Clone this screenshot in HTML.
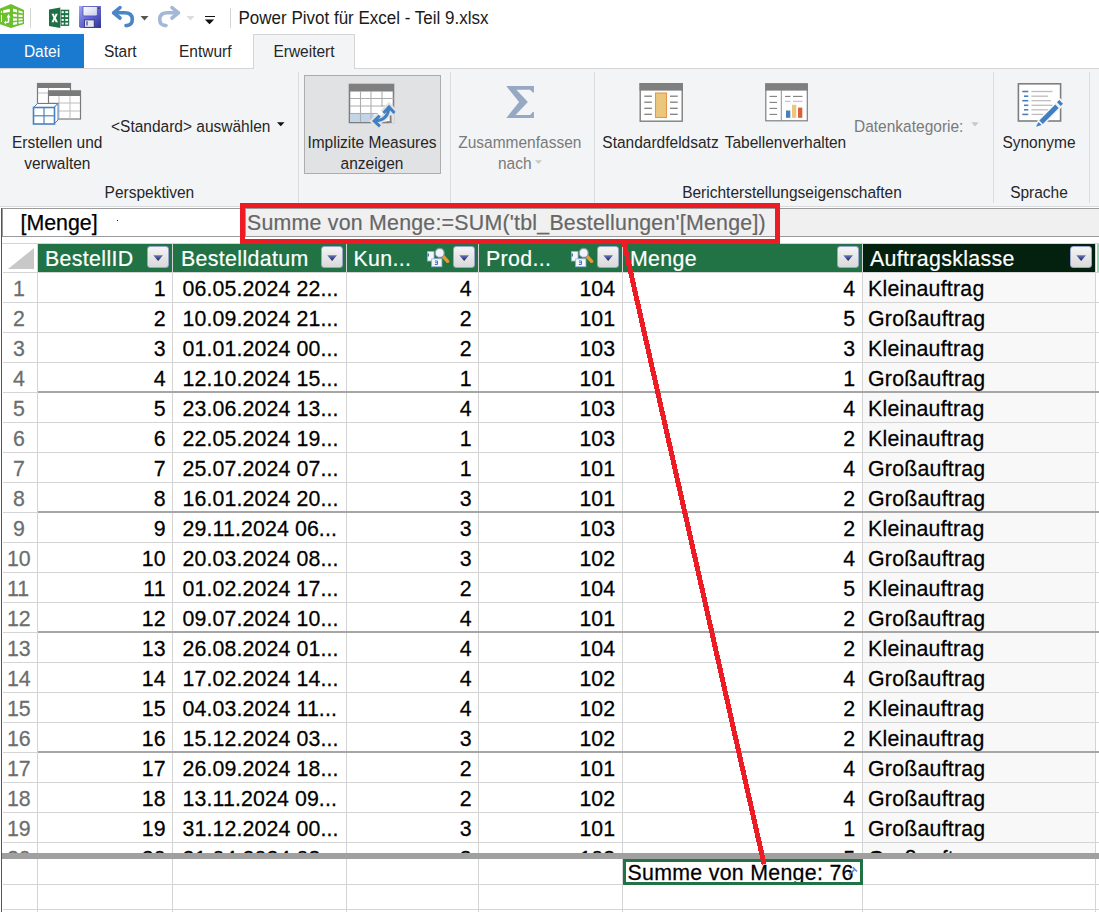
<!DOCTYPE html>
<html><head><meta charset="utf-8">
<style>
html,body{margin:0;padding:0;}
body{width:1099px;height:912px;overflow:hidden;position:relative;background:#fff;font-family:"Liberation Sans",sans-serif;}
.t{position:absolute;white-space:nowrap;line-height:1;}
.c{text-align:center;}
.sy{transform:scaleY(1.025);transform-origin:0 18px;-webkit-text-stroke:0.25px currentColor;}
.r{position:absolute;}
svg{position:absolute;overflow:visible;}
</style></head><body>
<svg style="left:0;top:0" width="36" height="32" viewBox="0 0 36 32">
<path d="M-1 9 L11 4 L24 10 L24 24 L11 28 L-1 24 Z" fill="#6cbf2e"/>
<g fill="#fff">
<path d="M13 8.5 L17 9.8 L17 12.5 L13 11.5Z"/><path d="M18.5 10.3 L22.6 11.8 L22.6 13.5 L18.5 12.6Z"/>
<path d="M13 13.8 L17 14.4 L17 16.8 L13 16.5Z"/><path d="M18.5 14.6 L22.6 15 L22.6 17 L18.5 16.9Z"/>
<path d="M13 18.3 L17 18.4 L17 20.5 L13 21Z"/><path d="M18.5 18.4 L22.6 18.4 L22.6 20 L18.5 20.6Z"/>
<path d="M13 22.5 L17 21.8 L17 24.2 L13 25Z"/><path d="M18.5 21.7 L22.6 21.3 L22.6 23 L18.5 23.8Z"/>
<path d="M3.2 10.3 L9.8 8.8 L9.8 12 L3.2 13Z"/>
<rect x="1" y="11" width="1" height="2"/><rect x="1" y="15" width="1" height="7"/>
<path d="M8.5 14 L10.5 17.5 L9.3 17.5 L9.3 21.5 Q9.3 23 7 23 L6 23 L6 24.5 L4 22.5 L6 20.5 L6 21.8 L7 21.8 Q7.8 21.8 7.8 21 L7.8 17.5 L6.5 17.5Z"/>
</g></svg>
<div class="r" style="left:30px;top:8px;width:1px;height:20px;background:#d4d4d4;"></div>
<svg style="left:0;top:0" width="1" height="1">
<rect x="60.6" y="9.7" width="8.6" height="16.2" fill="#1e7145"/>
<g fill="#fff"><rect x="61.6" y="11.2" width="2.2" height="1.9"/><rect x="65.3" y="11.2" width="2.8" height="1.9"/>
<rect x="61.6" y="15.2" width="2.2" height="1.9"/><rect x="65.3" y="15.2" width="2.8" height="1.9"/>
<rect x="61.6" y="19" width="2.2" height="1.9"/><rect x="65.3" y="19" width="2.8" height="1.9"/>
<rect x="61.6" y="22.6" width="2.2" height="1.9"/><rect x="65.3" y="22.6" width="2.8" height="1.9"/></g>
<path d="M49 9.4 L60.3 7.6 L60.3 28 L49 26Z" fill="#1e7145"/>
<path d="M51.6 13.8 H53.9 L54.7 16.3 L55.5 13.8 H57.8 L55.9 18 L57.9 22.3 H55.6 L54.7 19.7 L53.8 22.3 H51.5 L53.5 18Z" fill="#fff"/>
</svg>
<svg style="left:0;top:0" width="1" height="1">
<defs><linearGradient id="sv" x1="0" y1="0" x2="1" y2="1"><stop offset="0" stop-color="#a4a6f2"/><stop offset="0.5" stop-color="#6466d4"/><stop offset="1" stop-color="#2f3199"/></linearGradient>
<linearGradient id="sv2" x1="0" y1="0" x2="1" y2="1"><stop offset="0" stop-color="#ffffff"/><stop offset="1" stop-color="#c8cbe6"/></linearGradient></defs>
<path d="M79 6 H101 V28 H80.5 L79 26.5Z" fill="url(#sv)"/>
<path d="M83 6.5 H97.4 V14.6 Q97.4 15.9 96.1 15.9 H84.3 Q83 15.9 83 14.6Z" fill="url(#sv2)" stroke="#4245b8" stroke-width="0.7"/>
<rect x="84.6" y="19.9" width="9.6" height="7.4" fill="#e3e5f2" stroke="#2a2a66" stroke-width="0.8"/>
<rect x="86.3" y="21.2" width="1.4" height="4.3" fill="#4f52c0"/>
<rect x="98.2" y="7.6" width="1.2" height="1.2" fill="#222"/>
</svg>
<svg style="left:0;top:0" width="1" height="1">
<path d="M114 12.8 H124.5 Q132.3 12.8 132.3 19.3 Q132.3 25.6 126 25.6" fill="none" stroke="#4a86c5" stroke-width="3.6" stroke-linecap="round"/>
<path d="M120 7.6 L113.6 12.8 L120 18" fill="none" stroke="#4a86c5" stroke-width="3.6" stroke-linecap="round" stroke-linejoin="round"/>
</svg>
<svg style="left:140px;top:15px" width="9" height="6"><path d="M0.5 1 H8.5 L4.5 5.5Z" fill="#555"/></svg>
<svg style="left:0;top:0" width="1" height="1">
<path d="M178 12.8 H167.5 Q159.7 12.8 159.7 19.3 Q159.7 25.6 166 25.6" fill="none" stroke="#a3b8d6" stroke-width="3.6" stroke-linecap="round"/>
<path d="M172 7.6 L178.4 12.8 L172 18" fill="none" stroke="#a3b8d6" stroke-width="3.6" stroke-linecap="round" stroke-linejoin="round"/>
</svg>
<svg style="left:186px;top:15px" width="9" height="6"><path d="M0.5 1 H8.5 L4.5 5.5Z" fill="#dcdcdc"/></svg>
<div class="r" style="left:205px;top:15.6px;width:9.5px;height:1.4px;background:#111;"></div>
<svg style="left:204px;top:19px" width="12" height="8"><path d="M0.8 0.5 H10.2 L5.5 5.2Z" fill="#111"/></svg>
<div class="r" style="left:230px;top:8px;width:1px;height:20px;background:#d4d4d4;"></div>
<div class="t" style="left:238.5px;top:9.81px;font-size:17px;color:#1a1a1a;transform:scaleY(1.1);transform-origin:0 14.39px;">Power Pivot für Excel - Teil 9.xlsx</div>
<div class="r" style="left:0px;top:34px;width:84px;height:34px;background:#197acf;"></div>
<div class="t c" style="left:-158.0px;width:400px;top:44.48px;font-size:15.5px;color:#fff;transform:scaleY(1.1);transform-origin:0 13.12px;">Datei</div>
<div class="t c" style="left:-79.7px;width:400px;top:44.48px;font-size:15.5px;color:#262626;transform:scaleY(1.1);transform-origin:0 13.12px;">Start</div>
<div class="t c" style="left:5.3px;width:400px;top:44.48px;font-size:15.5px;color:#262626;transform:scaleY(1.1);transform-origin:0 13.12px;">Entwurf</div>
<div class="r" style="left:0px;top:68px;width:1099px;height:1px;background:#d5d5d5;"></div>
<div class="r" style="left:0px;top:69px;width:1099px;height:137px;background:#f3f4f6;"></div>
<div class="r" style="left:0px;top:206px;width:1099px;height:1px;background:#dadbdc;"></div>
<div class="r" style="left:253px;top:34px;width:102px;height:35px;background:#f3f4f6;box-sizing:border-box;border:1px solid #d5d5d5;border-bottom:none;"></div>
<div class="t c" style="left:104.0px;width:400px;top:44.48px;font-size:15.5px;color:#262626;transform:scaleY(1.1);transform-origin:0 13.12px;">Erweitert</div>
<div class="r" style="left:298px;top:72px;width:1px;height:131px;background:#dcdcdc;"></div>
<div class="r" style="left:450px;top:72px;width:1px;height:131px;background:#dcdcdc;"></div>
<div class="r" style="left:594px;top:72px;width:1px;height:131px;background:#dcdcdc;"></div>
<div class="r" style="left:993px;top:72px;width:1px;height:131px;background:#dcdcdc;"></div>
<div class="r" style="left:1089px;top:72px;width:1px;height:131px;background:#dcdcdc;"></div>
<svg style="left:32px;top:82px" width="50" height="44" viewBox="0 0 50 44">
<g>
<rect x="5.5" y="1.5" width="33" height="20" fill="#fff" stroke="#7a7a7a" stroke-width="1.2"/>
<rect x="5" y="1" width="34" height="5" fill="#7a7a7a"/>
<g stroke="#bdbdbd" stroke-width="1"><line x1="6" y1="11" x2="16" y2="11"/><line x1="16.5" y1="6" x2="16.5" y2="21"/></g>
<rect x="16.5" y="9" width="32" height="28" fill="#fff" stroke="#7a7a7a" stroke-width="1.2"/>
<rect x="16" y="8.5" width="33" height="5.5" fill="#7a7a7a"/>
<g stroke="#bdbdbd" stroke-width="1"><line x1="17" y1="21" x2="48" y2="21"/><line x1="17" y1="29" x2="48" y2="29"/><line x1="27" y1="14" x2="27" y2="37"/><line x1="38" y1="14" x2="38" y2="37"/></g>
</g>
<path d="M1.5 25.5 L5.5 21.5 L26 21.5 L22 25.5Z" fill="#fff" stroke="#4a80bf" stroke-width="1"/>
<path d="M22 25.5 L26 21.5 L26 38 L22 42Z" fill="#fff" stroke="#4a80bf" stroke-width="1"/>
<rect x="1.5" y="25.5" width="21" height="16.5" fill="#fff" stroke="#4a80bf" stroke-width="1.6"/>
<g stroke="#4a80bf" stroke-width="1.2"><line x1="1.5" y1="33.8" x2="22.5" y2="33.8"/><line x1="12" y1="25.5" x2="12" y2="42"/></g>
</svg>
<div class="t c" style="left:-142.8px;width:400px;top:135.28px;font-size:15.5px;color:#262626;transform:scaleY(1.1);transform-origin:0 13.12px;">Erstellen und</div>
<div class="t c" style="left:-142.7px;width:400px;top:156.28px;font-size:15.5px;color:#262626;transform:scaleY(1.1);transform-origin:0 13.12px;">verwalten</div>
<div class="t" style="left:111.0px;top:118.68px;font-size:15.5px;color:#262626;transform:scaleY(1.1);transform-origin:0 13.12px;">&lt;Standard&gt; auswählen</div>
<svg style="left:277px;top:122px" width="8" height="5"><path d="M0 0.3 H7.5 L3.75 4.3Z" fill="#111"/></svg>
<div class="t c" style="left:-50.6px;width:400px;top:185.18px;font-size:15.5px;color:#262626;transform:scaleY(1.1);transform-origin:0 13.12px;">Perspektiven</div>
<div class="r" style="left:304px;top:75px;width:137px;height:99px;background:#e1e2e3;box-sizing:border-box;border:1px solid #adadad;"></div>
<svg style="left:348px;top:83px" width="50" height="44" viewBox="0 0 50 44">
<rect x="1.5" y="1.5" width="44" height="38" fill="#fff" stroke="#7f7f7f" stroke-width="1.6"/>
<rect x="1" y="1" width="45" height="7.5" fill="#7f7f7f"/>
<rect x="2.3" y="31" width="24" height="8" fill="#c3d5ea"/>
<g stroke="#adadad" stroke-width="1.1"><line x1="2" y1="15.5" x2="46" y2="15.5"/><line x1="2" y1="23" x2="46" y2="23"/><line x1="2" y1="30.5" x2="30" y2="30.5"/>
<line x1="12.5" y1="8" x2="12.5" y2="39"/><line x1="23" y1="8" x2="23" y2="39"/><line x1="34" y1="8" x2="34" y2="24"/></g>
<path d="M41 22 Q40.5 37.5 25.5 38" fill="none" stroke="#e1e2e3" stroke-width="7"/>
<path d="M35 30 L41 23.5 L47 30" fill="none" stroke="#e1e2e3" stroke-width="6.5"/>
<path d="M31.5 32.5 L25.8 38 L31.7 43.5" fill="none" stroke="#e1e2e3" stroke-width="6.5"/>
<rect x="41.5" y="31" width="5" height="9.5" fill="#e1e2e3"/>
<rect x="41.8" y="32.5" width="1.7" height="7.3" fill="#7f7f7f"/>
<rect x="38.5" y="38.2" width="5" height="1.6" fill="#7f7f7f"/>
<path d="M41 23.5 Q40.5 37.5 26.5 38" fill="none" stroke="#3f7fc3" stroke-width="3"/>
<path d="M35.5 29.9 L41 24 L46.5 29.9" fill="none" stroke="#3f7fc3" stroke-width="3" stroke-linejoin="miter"/>
<path d="M31.7 32.7 L26.2 38 L31.9 43.4" fill="none" stroke="#3f7fc3" stroke-width="3" stroke-linejoin="miter"/>
</svg>
<div class="t c" style="left:172.0px;width:400px;top:135.28px;font-size:15.5px;color:#262626;transform:scaleY(1.1);transform-origin:0 13.12px;">Implizite Measures</div>
<div class="t c" style="left:172.0px;width:400px;top:156.28px;font-size:15.5px;color:#262626;transform:scaleY(1.1);transform-origin:0 13.12px;">anzeigen</div>
<svg style="left:0;top:0" width="1" height="1"><path transform="translate(0,0)" d="M506.24 85.95 L533.93 85.95 L533.93 92.53 L532.83 92.53 L530.09 89.79 L516.38 89.79 L527.89 102.12 L515.56 115 L530.09 115 L532.83 111.99 L533.93 111.99 L533.93 118.02 L506.24 118.02 L519.12 102.12Z" fill="#97a8c4"/></svg>
<div class="t c" style="left:319.8px;width:400px;top:135.28px;font-size:15.5px;color:#7a7a7a;transform:scaleY(1.1);transform-origin:0 13.12px;">Zusammenfassen</div>
<div class="t c" style="left:314.8px;width:400px;top:156.48px;font-size:15.5px;color:#7a7a7a;transform:scaleY(1.1);transform-origin:0 13.12px;">nach</div>
<svg style="left:535px;top:160px" width="8" height="5"><path d="M0 0.2 H7 L3.5 4Z" fill="#c8c8c8"/></svg>
<svg style="left:638px;top:82px" width="46" height="41" viewBox="0 0 46 41">
<rect x="2.2" y="1.7" width="42" height="37.5" fill="#fff" stroke="#7f7f7f" stroke-width="1.4"/>
<rect x="1.5" y="1" width="43.4" height="7.6" fill="#7f7f7f"/>
<rect x="17.5" y="11" width="11" height="24.5" fill="#ebc77e" stroke="#e8954a" stroke-width="1.1"/>
<g stroke="#7f7f7f" stroke-width="1.3"><line x1="6.3" y1="14.2" x2="13.9" y2="14.2"/><line x1="6.3" y1="20.2" x2="13.9" y2="20.2"/><line x1="6.3" y1="26.3" x2="13.9" y2="26.3"/><line x1="6.3" y1="32.3" x2="13.9" y2="32.3"/>
<line x1="32" y1="14.2" x2="39.7" y2="14.2"/><line x1="32" y1="20.2" x2="39.7" y2="20.2"/><line x1="32" y1="26.3" x2="39.7" y2="26.3"/><line x1="32" y1="32.3" x2="39.7" y2="32.3"/></g>
</svg>
<svg style="left:764px;top:82px" width="46" height="41" viewBox="0 0 46 41">
<rect x="1.8" y="2" width="41.5" height="36.8" fill="#fff" stroke="#7f7f7f" stroke-width="1.2"/>
<rect x="1.3" y="1.3" width="42.4" height="7.3" fill="#7f7f7f"/>
<line x1="17.3" y1="8" x2="17.3" y2="38.8" stroke="#8f8f8f" stroke-width="1"/>
<g stroke="#7f7f7f" stroke-width="1.1"><line x1="5.5" y1="14.4" x2="13" y2="14.4"/><line x1="5.5" y1="20.4" x2="13" y2="20.4"/><line x1="5.5" y1="26.4" x2="13" y2="26.4"/><line x1="5.5" y1="32.4" x2="13" y2="32.4"/>
<line x1="21" y1="14.4" x2="26.5" y2="14.4"/><line x1="29" y1="14.4" x2="38.5" y2="14.4"/></g>
<g stroke="#bdbdbd" stroke-width="1.1"><line x1="21" y1="19.3" x2="26.5" y2="19.3"/><line x1="29" y1="19.3" x2="38.5" y2="19.3"/></g>
<rect x="22" y="28.5" width="4.3" height="7.3" fill="#4a7fbd"/>
<rect x="28" y="22.8" width="4.3" height="13" fill="#ebc77e"/>
<rect x="34" y="25.6" width="4.3" height="10.2" fill="#d8603d"/>
</svg>
<div class="t c" style="left:460.5px;width:400px;top:135.28px;font-size:15.5px;color:#262626;transform:scaleY(1.1);transform-origin:0 13.12px;">Standardfeldsatz</div>
<div class="t c" style="left:585.5px;width:400px;top:135.28px;font-size:15.5px;color:#262626;transform:scaleY(1.1);transform-origin:0 13.12px;">Tabellenverhalten</div>
<div class="t" style="left:854.0px;top:118.68px;font-size:15.5px;color:#7a7a7a;transform:scaleY(1.1);transform-origin:0 13.12px;">Datenkategorie:</div>
<svg style="left:971px;top:121.5px" width="9" height="5"><path d="M0.3 0.2 H7.7 L4 4.4Z" fill="#c8c8c8"/></svg>
<div class="t c" style="left:592.0px;width:400px;top:185.18px;font-size:15.5px;color:#262626;transform:scaleY(1.1);transform-origin:0 13.12px;">Berichterstellungseigenschaften</div>
<svg style="left:1016px;top:82px" width="50" height="46" viewBox="0 0 50 46">
<rect x="2.4" y="1.8" width="42.2" height="37.2" fill="#fff" stroke="#7f7f7f" stroke-width="1.6"/>
<g stroke="#4a80bf" stroke-width="1.6"><line x1="6.3" y1="9.5" x2="12.3" y2="9.5"/><line x1="8" y1="14.2" x2="12.3" y2="14.2"/><line x1="6.3" y1="18.7" x2="12.3" y2="18.7"/><line x1="8" y1="23.3" x2="12.3" y2="23.3"/><line x1="8" y1="27.8" x2="12.3" y2="27.8"/><line x1="6.3" y1="32.4" x2="12.3" y2="32.4"/></g>
<g stroke="#bdbdbd" stroke-width="1.3"><line x1="15.5" y1="9.5" x2="36.5" y2="9.5"/><line x1="15.5" y1="14.2" x2="32" y2="14.2"/><line x1="15.5" y1="18.7" x2="35" y2="18.7"/><line x1="15.5" y1="23.3" x2="36.5" y2="23.3"/><line x1="15.5" y1="27.8" x2="32" y2="27.8"/><line x1="15.5" y1="32.4" x2="27" y2="32.4"/></g>
<path d="M44 16 L49.5 21.5 L27 44 L19 46.5 L21.5 38.5Z" fill="#f3f4f6"/>
<path d="M43.3 18 L47 21.7 L44.7 23.9 L41 20.2Z" fill="#3f7fc3"/>
<path d="M39.3 22.5 L42.7 25.9 L26.8 41.9 L23.4 38.5Z" fill="#3f7fc3"/>
<path d="M22.5 39.9 L25.6 43 L20 44.7Z" fill="#3f7fc3"/>
</svg>
<div class="t c" style="left:839.0px;width:400px;top:135.28px;font-size:15.5px;color:#262626;transform:scaleY(1.1);transform-origin:0 13.12px;">Synonyme</div>
<div class="t c" style="left:839.0px;width:400px;top:185.18px;font-size:15.5px;color:#262626;transform:scaleY(1.1);transform-origin:0 13.12px;">Sprache</div>
<div class="r" style="left:0px;top:207px;width:1099px;height:1px;background:#ffffff;"></div>
<div class="r" style="left:2px;top:208px;width:1097px;height:1px;background:#9a9a9a;"></div>
<div class="r" style="left:2px;top:209px;width:1097px;height:27px;background:#ffffff;"></div>
<div class="r" style="left:245px;top:209px;width:854px;height:27px;background:#f0f0f0;"></div>
<div class="r" style="left:245px;top:208px;width:1px;height:29px;background:#9a9a9a;"></div>
<div class="r" style="left:2px;top:236px;width:1097px;height:1px;background:#9a9a9a;"></div>
<div class="r" style="left:2px;top:208px;width:1px;height:29px;background:#9a9a9a;"></div>
<div class="t" style="left:20.5px;top:212.84px;font-size:21.33px;color:#000;-webkit-text-stroke:0.25px #000;">[Menge]</div>
<div class="r" style="left:117px;top:220px;width:1px;height:1px;background:#000;"></div>
<div class="t" style="left:247.0px;top:212.94px;font-size:21.33px;color:#666;letter-spacing:0.235px;-webkit-text-stroke:0.2px #666;">Summe von Menge:=SUM('tbl_Bestellungen'[Menge])</div>
<div class="r" style="left:2px;top:243px;width:1097px;height:1px;background:#d4d4d4;"></div>
<div class="r" style="left:2px;top:244px;width:35px;height:28px;background:#ffffff;"></div>
<svg style="left:8px;top:248px" width="27" height="22"><path d="M0 21 L26 0 L26 21Z" fill="#c8c8c8"/></svg>
<div class="r" style="left:38px;top:244px;width:824px;height:28px;background:#217346;"></div>
<div class="r" style="left:863px;top:244px;width:232px;height:28px;background:#04200f;"></div>
<div class="r" style="left:1097px;top:244px;width:2px;height:28px;background:#9fd8b5;"></div>
<div class="r" style="left:863px;top:273px;width:232px;height:580px;background:#f8f8f8;"></div>
<div class="r" style="left:37px;top:244px;width:1px;height:668px;background:#d4d4d4;"></div>
<div class="r" style="left:172px;top:244px;width:1px;height:668px;background:#d4d4d4;"></div>
<div class="r" style="left:346px;top:244px;width:1px;height:668px;background:#d4d4d4;"></div>
<div class="r" style="left:478px;top:244px;width:1px;height:668px;background:#d4d4d4;"></div>
<div class="r" style="left:622px;top:244px;width:1px;height:668px;background:#d4d4d4;"></div>
<div class="r" style="left:862px;top:244px;width:1px;height:668px;background:#d4d4d4;"></div>
<div class="r" style="left:1095px;top:244px;width:1px;height:668px;background:#d4d4d4;"></div>
<div class="r" style="left:3px;top:272px;width:1096px;height:1px;background:#d4d4d4;"></div>
<div class="r" style="left:3px;top:302px;width:1096px;height:1px;background:#d4d4d4;"></div>
<div class="r" style="left:3px;top:332px;width:1096px;height:1px;background:#d4d4d4;"></div>
<div class="r" style="left:3px;top:362px;width:1096px;height:1px;background:#d4d4d4;"></div>
<div class="r" style="left:3px;top:392px;width:34px;height:1px;background:#d4d4d4;"></div>
<div class="r" style="left:38px;top:391px;width:1061px;height:2px;background:#a6a6a6;"></div>
<div class="r" style="left:3px;top:422px;width:1096px;height:1px;background:#d4d4d4;"></div>
<div class="r" style="left:3px;top:452px;width:1096px;height:1px;background:#d4d4d4;"></div>
<div class="r" style="left:3px;top:482px;width:1096px;height:1px;background:#d4d4d4;"></div>
<div class="r" style="left:3px;top:512px;width:34px;height:1px;background:#d4d4d4;"></div>
<div class="r" style="left:38px;top:511px;width:1061px;height:2px;background:#a6a6a6;"></div>
<div class="r" style="left:3px;top:542px;width:1096px;height:1px;background:#d4d4d4;"></div>
<div class="r" style="left:3px;top:572px;width:1096px;height:1px;background:#d4d4d4;"></div>
<div class="r" style="left:3px;top:602px;width:1096px;height:1px;background:#d4d4d4;"></div>
<div class="r" style="left:3px;top:632px;width:34px;height:1px;background:#d4d4d4;"></div>
<div class="r" style="left:38px;top:631px;width:1061px;height:2px;background:#a6a6a6;"></div>
<div class="r" style="left:3px;top:662px;width:1096px;height:1px;background:#d4d4d4;"></div>
<div class="r" style="left:3px;top:692px;width:1096px;height:1px;background:#d4d4d4;"></div>
<div class="r" style="left:3px;top:722px;width:1096px;height:1px;background:#d4d4d4;"></div>
<div class="r" style="left:3px;top:752px;width:34px;height:1px;background:#d4d4d4;"></div>
<div class="r" style="left:38px;top:751px;width:1061px;height:2px;background:#a6a6a6;"></div>
<div class="r" style="left:3px;top:782px;width:1096px;height:1px;background:#d4d4d4;"></div>
<div class="r" style="left:3px;top:812px;width:1096px;height:1px;background:#d4d4d4;"></div>
<div class="r" style="left:3px;top:842px;width:1096px;height:1px;background:#d4d4d4;"></div>
<div class="r" style="left:3px;top:884px;width:1096px;height:1px;background:#d4d4d4;"></div>
<div class="r" style="left:3px;top:909px;width:1096px;height:1px;background:#d4d4d4;"></div>
<div class="t" style="left:45.0px;top:248.94px;font-size:21.33px;color:#fff;letter-spacing:0.35px;-webkit-text-stroke:0.2px #fff;">BestellID</div>
<div class="t" style="left:181.0px;top:248.94px;font-size:21.33px;color:#fff;letter-spacing:0.35px;-webkit-text-stroke:0.2px #fff;">Bestelldatum</div>
<div class="t" style="left:353.5px;top:248.94px;font-size:21.33px;color:#fff;letter-spacing:0.35px;-webkit-text-stroke:0.2px #fff;">Kun...</div>
<div class="t" style="left:486.0px;top:248.94px;font-size:21.33px;color:#fff;letter-spacing:0.35px;-webkit-text-stroke:0.2px #fff;">Prod...</div>
<div class="t" style="left:630.0px;top:248.94px;font-size:21.33px;color:#fff;letter-spacing:0.35px;-webkit-text-stroke:0.2px #fff;">Menge</div>
<div class="t" style="left:870.0px;top:248.94px;font-size:21.33px;color:#fff;letter-spacing:0.35px;-webkit-text-stroke:0.2px #fff;">Auftragsklasse</div>
<div class="r" style="left:147px;top:246px;width:22px;height:22px;box-sizing:border-box;border:1px solid #9aa3c9;border-radius:3px;background:linear-gradient(#f4f4f4,#d9d9dc);"></div><svg style="left:153px;top:255px" width="11" height="7"><defs><linearGradient id="g147" x1="0" y1="0" x2="0" y2="1"><stop offset="0" stop-color="#6675c4"/><stop offset="1" stop-color="#1c1d4a"/></linearGradient></defs><path d="M0.3 0.3 H10 L5.15 6Z" fill="url(#g147)"/></svg>
<div class="r" style="left:321px;top:246px;width:22px;height:22px;box-sizing:border-box;border:1px solid #9aa3c9;border-radius:3px;background:linear-gradient(#f4f4f4,#d9d9dc);"></div><svg style="left:327px;top:255px" width="11" height="7"><defs><linearGradient id="g321" x1="0" y1="0" x2="0" y2="1"><stop offset="0" stop-color="#6675c4"/><stop offset="1" stop-color="#1c1d4a"/></linearGradient></defs><path d="M0.3 0.3 H10 L5.15 6Z" fill="url(#g321)"/></svg>
<div class="r" style="left:453px;top:246px;width:22px;height:22px;box-sizing:border-box;border:1px solid #9aa3c9;border-radius:3px;background:linear-gradient(#f4f4f4,#d9d9dc);"></div><svg style="left:459px;top:255px" width="11" height="7"><defs><linearGradient id="g453" x1="0" y1="0" x2="0" y2="1"><stop offset="0" stop-color="#6675c4"/><stop offset="1" stop-color="#1c1d4a"/></linearGradient></defs><path d="M0.3 0.3 H10 L5.15 6Z" fill="url(#g453)"/></svg>
<div class="r" style="left:597px;top:246px;width:22px;height:22px;box-sizing:border-box;border:1px solid #9aa3c9;border-radius:3px;background:linear-gradient(#f4f4f4,#d9d9dc);"></div><svg style="left:603px;top:255px" width="11" height="7"><defs><linearGradient id="g597" x1="0" y1="0" x2="0" y2="1"><stop offset="0" stop-color="#6675c4"/><stop offset="1" stop-color="#1c1d4a"/></linearGradient></defs><path d="M0.3 0.3 H10 L5.15 6Z" fill="url(#g597)"/></svg>
<div class="r" style="left:837px;top:246px;width:22px;height:22px;box-sizing:border-box;border:1px solid #9aa3c9;border-radius:3px;background:linear-gradient(#f4f4f4,#d9d9dc);"></div><svg style="left:843px;top:255px" width="11" height="7"><defs><linearGradient id="g837" x1="0" y1="0" x2="0" y2="1"><stop offset="0" stop-color="#6675c4"/><stop offset="1" stop-color="#1c1d4a"/></linearGradient></defs><path d="M0.3 0.3 H10 L5.15 6Z" fill="url(#g837)"/></svg>
<div class="r" style="left:1070px;top:246px;width:22px;height:22px;box-sizing:border-box;border:1px solid #9aa3c9;border-radius:3px;background:linear-gradient(#f4f4f4,#d9d9dc);"></div><svg style="left:1076px;top:255px" width="11" height="7"><defs><linearGradient id="g1070" x1="0" y1="0" x2="0" y2="1"><stop offset="0" stop-color="#6675c4"/><stop offset="1" stop-color="#1c1d4a"/></linearGradient></defs><path d="M0.3 0.3 H10 L5.15 6Z" fill="url(#g1070)"/></svg>
<svg style="left:426px;top:247px" width="24" height="21" viewBox="0 0 24 21"><rect x="1.4" y="4.6" width="6.6" height="9.4" fill="#f4f7fc" stroke="#9db2dc" stroke-width="0.8"/><rect x="1.6" y="6.5" width="1.4" height="3" fill="#4f72bd"/><rect x="5.7" y="11.8" width="10.2" height="7.9" fill="#f4f7fc" stroke="#9db2dc" stroke-width="0.8"/><path d="M8.8 14 H11.5 V17.5 H8.8 M9 15.7 H11.5" fill="none" stroke="#4f72bd" stroke-width="1"/><line x1="16.8" y1="9" x2="21.6" y2="14.3" stroke="#e39a32" stroke-width="3.4" stroke-linecap="round"/><circle cx="13.7" cy="5.9" r="4.5" fill="#eef3fc" stroke="#8d939c" stroke-width="1.1"/></svg>
<svg style="left:570px;top:247px" width="24" height="21" viewBox="0 0 24 21"><rect x="1.4" y="4.6" width="6.6" height="9.4" fill="#f4f7fc" stroke="#9db2dc" stroke-width="0.8"/><rect x="1.6" y="6.5" width="1.4" height="3" fill="#4f72bd"/><rect x="5.7" y="11.8" width="10.2" height="7.9" fill="#f4f7fc" stroke="#9db2dc" stroke-width="0.8"/><path d="M8.8 14 H11.5 V17.5 H8.8 M9 15.7 H11.5" fill="none" stroke="#4f72bd" stroke-width="1"/><line x1="16.8" y1="9" x2="21.6" y2="14.3" stroke="#e39a32" stroke-width="3.4" stroke-linecap="round"/><circle cx="13.7" cy="5.9" r="4.5" fill="#eef3fc" stroke="#8d939c" stroke-width="1.1"/></svg>
<div class="r" style="left:0;top:273px;width:1099px;height:580px;overflow:hidden;">
<div class="t sy" style="left:13px;top:5.74px;font-size:21.33px;color:#6d6d6d;">1</div><div class="t sy" style="right:933.5px;top:5.74px;font-size:21.33px;color:#000;">1</div><div class="t sy" style="left:182.5px;top:5.74px;font-size:21.33px;color:#000;letter-spacing:0.12px;">06.05.2024 22...</div><div class="t sy" style="right:627.5px;top:5.74px;font-size:21.33px;color:#000;">4</div><div class="t sy" style="right:484px;top:5.74px;font-size:21.33px;color:#000;">104</div><div class="t sy" style="right:244px;top:5.74px;font-size:21.33px;color:#000;">4</div><div class="t sy" style="left:868px;top:5.74px;font-size:21.33px;color:#000;letter-spacing:0.22px;">Kleinauftrag</div>
<div class="t sy" style="left:13px;top:35.74px;font-size:21.33px;color:#6d6d6d;">2</div><div class="t sy" style="right:933.5px;top:35.74px;font-size:21.33px;color:#000;">2</div><div class="t sy" style="left:182.5px;top:35.74px;font-size:21.33px;color:#000;letter-spacing:0.12px;">10.09.2024 21...</div><div class="t sy" style="right:627.5px;top:35.74px;font-size:21.33px;color:#000;">2</div><div class="t sy" style="right:484px;top:35.74px;font-size:21.33px;color:#000;">101</div><div class="t sy" style="right:244px;top:35.74px;font-size:21.33px;color:#000;">5</div><div class="t sy" style="left:868px;top:35.74px;font-size:21.33px;color:#000;letter-spacing:0.22px;">Großauftrag</div>
<div class="t sy" style="left:13px;top:65.74px;font-size:21.33px;color:#6d6d6d;">3</div><div class="t sy" style="right:933.5px;top:65.74px;font-size:21.33px;color:#000;">3</div><div class="t sy" style="left:182.5px;top:65.74px;font-size:21.33px;color:#000;letter-spacing:0.12px;">01.01.2024 00...</div><div class="t sy" style="right:627.5px;top:65.74px;font-size:21.33px;color:#000;">2</div><div class="t sy" style="right:484px;top:65.74px;font-size:21.33px;color:#000;">103</div><div class="t sy" style="right:244px;top:65.74px;font-size:21.33px;color:#000;">3</div><div class="t sy" style="left:868px;top:65.74px;font-size:21.33px;color:#000;letter-spacing:0.22px;">Kleinauftrag</div>
<div class="t sy" style="left:13px;top:95.74px;font-size:21.33px;color:#6d6d6d;">4</div><div class="t sy" style="right:933.5px;top:95.74px;font-size:21.33px;color:#000;">4</div><div class="t sy" style="left:182.5px;top:95.74px;font-size:21.33px;color:#000;letter-spacing:0.12px;">12.10.2024 15...</div><div class="t sy" style="right:627.5px;top:95.74px;font-size:21.33px;color:#000;">1</div><div class="t sy" style="right:484px;top:95.74px;font-size:21.33px;color:#000;">101</div><div class="t sy" style="right:244px;top:95.74px;font-size:21.33px;color:#000;">1</div><div class="t sy" style="left:868px;top:95.74px;font-size:21.33px;color:#000;letter-spacing:0.22px;">Großauftrag</div>
<div class="t sy" style="left:13px;top:125.74px;font-size:21.33px;color:#6d6d6d;">5</div><div class="t sy" style="right:933.5px;top:125.74px;font-size:21.33px;color:#000;">5</div><div class="t sy" style="left:182.5px;top:125.74px;font-size:21.33px;color:#000;letter-spacing:0.12px;">23.06.2024 13...</div><div class="t sy" style="right:627.5px;top:125.74px;font-size:21.33px;color:#000;">4</div><div class="t sy" style="right:484px;top:125.74px;font-size:21.33px;color:#000;">103</div><div class="t sy" style="right:244px;top:125.74px;font-size:21.33px;color:#000;">4</div><div class="t sy" style="left:868px;top:125.74px;font-size:21.33px;color:#000;letter-spacing:0.22px;">Kleinauftrag</div>
<div class="t sy" style="left:13px;top:155.74px;font-size:21.33px;color:#6d6d6d;">6</div><div class="t sy" style="right:933.5px;top:155.74px;font-size:21.33px;color:#000;">6</div><div class="t sy" style="left:182.5px;top:155.74px;font-size:21.33px;color:#000;letter-spacing:0.12px;">22.05.2024 19...</div><div class="t sy" style="right:627.5px;top:155.74px;font-size:21.33px;color:#000;">1</div><div class="t sy" style="right:484px;top:155.74px;font-size:21.33px;color:#000;">103</div><div class="t sy" style="right:244px;top:155.74px;font-size:21.33px;color:#000;">2</div><div class="t sy" style="left:868px;top:155.74px;font-size:21.33px;color:#000;letter-spacing:0.22px;">Kleinauftrag</div>
<div class="t sy" style="left:13px;top:185.74px;font-size:21.33px;color:#6d6d6d;">7</div><div class="t sy" style="right:933.5px;top:185.74px;font-size:21.33px;color:#000;">7</div><div class="t sy" style="left:182.5px;top:185.74px;font-size:21.33px;color:#000;letter-spacing:0.12px;">25.07.2024 07...</div><div class="t sy" style="right:627.5px;top:185.74px;font-size:21.33px;color:#000;">1</div><div class="t sy" style="right:484px;top:185.74px;font-size:21.33px;color:#000;">101</div><div class="t sy" style="right:244px;top:185.74px;font-size:21.33px;color:#000;">4</div><div class="t sy" style="left:868px;top:185.74px;font-size:21.33px;color:#000;letter-spacing:0.22px;">Großauftrag</div>
<div class="t sy" style="left:13px;top:215.74px;font-size:21.33px;color:#6d6d6d;">8</div><div class="t sy" style="right:933.5px;top:215.74px;font-size:21.33px;color:#000;">8</div><div class="t sy" style="left:182.5px;top:215.74px;font-size:21.33px;color:#000;letter-spacing:0.12px;">16.01.2024 20...</div><div class="t sy" style="right:627.5px;top:215.74px;font-size:21.33px;color:#000;">3</div><div class="t sy" style="right:484px;top:215.74px;font-size:21.33px;color:#000;">101</div><div class="t sy" style="right:244px;top:215.74px;font-size:21.33px;color:#000;">2</div><div class="t sy" style="left:868px;top:215.74px;font-size:21.33px;color:#000;letter-spacing:0.22px;">Großauftrag</div>
<div class="t sy" style="left:13px;top:245.74px;font-size:21.33px;color:#6d6d6d;">9</div><div class="t sy" style="right:933.5px;top:245.74px;font-size:21.33px;color:#000;">9</div><div class="t sy" style="left:182.5px;top:245.74px;font-size:21.33px;color:#000;letter-spacing:0.12px;">29.11.2024 06...</div><div class="t sy" style="right:627.5px;top:245.74px;font-size:21.33px;color:#000;">3</div><div class="t sy" style="right:484px;top:245.74px;font-size:21.33px;color:#000;">103</div><div class="t sy" style="right:244px;top:245.74px;font-size:21.33px;color:#000;">2</div><div class="t sy" style="left:868px;top:245.74px;font-size:21.33px;color:#000;letter-spacing:0.22px;">Kleinauftrag</div>
<div class="t sy" style="left:7px;top:275.74px;font-size:21.33px;color:#6d6d6d;">10</div><div class="t sy" style="right:933.5px;top:275.74px;font-size:21.33px;color:#000;">10</div><div class="t sy" style="left:182.5px;top:275.74px;font-size:21.33px;color:#000;letter-spacing:0.12px;">20.03.2024 08...</div><div class="t sy" style="right:627.5px;top:275.74px;font-size:21.33px;color:#000;">3</div><div class="t sy" style="right:484px;top:275.74px;font-size:21.33px;color:#000;">102</div><div class="t sy" style="right:244px;top:275.74px;font-size:21.33px;color:#000;">4</div><div class="t sy" style="left:868px;top:275.74px;font-size:21.33px;color:#000;letter-spacing:0.22px;">Großauftrag</div>
<div class="t sy" style="left:7px;top:305.74px;font-size:21.33px;color:#6d6d6d;">11</div><div class="t sy" style="right:933.5px;top:305.74px;font-size:21.33px;color:#000;">11</div><div class="t sy" style="left:182.5px;top:305.74px;font-size:21.33px;color:#000;letter-spacing:0.12px;">01.02.2024 17...</div><div class="t sy" style="right:627.5px;top:305.74px;font-size:21.33px;color:#000;">2</div><div class="t sy" style="right:484px;top:305.74px;font-size:21.33px;color:#000;">104</div><div class="t sy" style="right:244px;top:305.74px;font-size:21.33px;color:#000;">5</div><div class="t sy" style="left:868px;top:305.74px;font-size:21.33px;color:#000;letter-spacing:0.22px;">Kleinauftrag</div>
<div class="t sy" style="left:7px;top:335.74px;font-size:21.33px;color:#6d6d6d;">12</div><div class="t sy" style="right:933.5px;top:335.74px;font-size:21.33px;color:#000;">12</div><div class="t sy" style="left:182.5px;top:335.74px;font-size:21.33px;color:#000;letter-spacing:0.12px;">09.07.2024 10...</div><div class="t sy" style="right:627.5px;top:335.74px;font-size:21.33px;color:#000;">4</div><div class="t sy" style="right:484px;top:335.74px;font-size:21.33px;color:#000;">101</div><div class="t sy" style="right:244px;top:335.74px;font-size:21.33px;color:#000;">2</div><div class="t sy" style="left:868px;top:335.74px;font-size:21.33px;color:#000;letter-spacing:0.22px;">Großauftrag</div>
<div class="t sy" style="left:7px;top:365.74px;font-size:21.33px;color:#6d6d6d;">13</div><div class="t sy" style="right:933.5px;top:365.74px;font-size:21.33px;color:#000;">13</div><div class="t sy" style="left:182.5px;top:365.74px;font-size:21.33px;color:#000;letter-spacing:0.12px;">26.08.2024 01...</div><div class="t sy" style="right:627.5px;top:365.74px;font-size:21.33px;color:#000;">4</div><div class="t sy" style="right:484px;top:365.74px;font-size:21.33px;color:#000;">104</div><div class="t sy" style="right:244px;top:365.74px;font-size:21.33px;color:#000;">2</div><div class="t sy" style="left:868px;top:365.74px;font-size:21.33px;color:#000;letter-spacing:0.22px;">Kleinauftrag</div>
<div class="t sy" style="left:7px;top:395.74px;font-size:21.33px;color:#6d6d6d;">14</div><div class="t sy" style="right:933.5px;top:395.74px;font-size:21.33px;color:#000;">14</div><div class="t sy" style="left:182.5px;top:395.74px;font-size:21.33px;color:#000;letter-spacing:0.12px;">17.02.2024 14...</div><div class="t sy" style="right:627.5px;top:395.74px;font-size:21.33px;color:#000;">4</div><div class="t sy" style="right:484px;top:395.74px;font-size:21.33px;color:#000;">102</div><div class="t sy" style="right:244px;top:395.74px;font-size:21.33px;color:#000;">4</div><div class="t sy" style="left:868px;top:395.74px;font-size:21.33px;color:#000;letter-spacing:0.22px;">Großauftrag</div>
<div class="t sy" style="left:7px;top:425.74px;font-size:21.33px;color:#6d6d6d;">15</div><div class="t sy" style="right:933.5px;top:425.74px;font-size:21.33px;color:#000;">15</div><div class="t sy" style="left:182.5px;top:425.74px;font-size:21.33px;color:#000;letter-spacing:0.12px;">04.03.2024 11...</div><div class="t sy" style="right:627.5px;top:425.74px;font-size:21.33px;color:#000;">4</div><div class="t sy" style="right:484px;top:425.74px;font-size:21.33px;color:#000;">102</div><div class="t sy" style="right:244px;top:425.74px;font-size:21.33px;color:#000;">2</div><div class="t sy" style="left:868px;top:425.74px;font-size:21.33px;color:#000;letter-spacing:0.22px;">Kleinauftrag</div>
<div class="t sy" style="left:7px;top:455.74px;font-size:21.33px;color:#6d6d6d;">16</div><div class="t sy" style="right:933.5px;top:455.74px;font-size:21.33px;color:#000;">16</div><div class="t sy" style="left:182.5px;top:455.74px;font-size:21.33px;color:#000;letter-spacing:0.12px;">15.12.2024 03...</div><div class="t sy" style="right:627.5px;top:455.74px;font-size:21.33px;color:#000;">3</div><div class="t sy" style="right:484px;top:455.74px;font-size:21.33px;color:#000;">102</div><div class="t sy" style="right:244px;top:455.74px;font-size:21.33px;color:#000;">2</div><div class="t sy" style="left:868px;top:455.74px;font-size:21.33px;color:#000;letter-spacing:0.22px;">Kleinauftrag</div>
<div class="t sy" style="left:7px;top:485.74px;font-size:21.33px;color:#6d6d6d;">17</div><div class="t sy" style="right:933.5px;top:485.74px;font-size:21.33px;color:#000;">17</div><div class="t sy" style="left:182.5px;top:485.74px;font-size:21.33px;color:#000;letter-spacing:0.12px;">26.09.2024 18...</div><div class="t sy" style="right:627.5px;top:485.74px;font-size:21.33px;color:#000;">2</div><div class="t sy" style="right:484px;top:485.74px;font-size:21.33px;color:#000;">101</div><div class="t sy" style="right:244px;top:485.74px;font-size:21.33px;color:#000;">4</div><div class="t sy" style="left:868px;top:485.74px;font-size:21.33px;color:#000;letter-spacing:0.22px;">Großauftrag</div>
<div class="t sy" style="left:7px;top:515.74px;font-size:21.33px;color:#6d6d6d;">18</div><div class="t sy" style="right:933.5px;top:515.74px;font-size:21.33px;color:#000;">18</div><div class="t sy" style="left:182.5px;top:515.74px;font-size:21.33px;color:#000;letter-spacing:0.12px;">13.11.2024 09...</div><div class="t sy" style="right:627.5px;top:515.74px;font-size:21.33px;color:#000;">2</div><div class="t sy" style="right:484px;top:515.74px;font-size:21.33px;color:#000;">102</div><div class="t sy" style="right:244px;top:515.74px;font-size:21.33px;color:#000;">4</div><div class="t sy" style="left:868px;top:515.74px;font-size:21.33px;color:#000;letter-spacing:0.22px;">Großauftrag</div>
<div class="t sy" style="left:7px;top:545.74px;font-size:21.33px;color:#6d6d6d;">19</div><div class="t sy" style="right:933.5px;top:545.74px;font-size:21.33px;color:#000;">19</div><div class="t sy" style="left:182.5px;top:545.74px;font-size:21.33px;color:#000;letter-spacing:0.12px;">31.12.2024 00...</div><div class="t sy" style="right:627.5px;top:545.74px;font-size:21.33px;color:#000;">3</div><div class="t sy" style="right:484px;top:545.74px;font-size:21.33px;color:#000;">101</div><div class="t sy" style="right:244px;top:545.74px;font-size:21.33px;color:#000;">1</div><div class="t sy" style="left:868px;top:545.74px;font-size:21.33px;color:#000;letter-spacing:0.22px;">Großauftrag</div>
<div class="t sy" style="left:7px;top:575.74px;font-size:21.33px;color:#6d6d6d;">20</div><div class="t sy" style="right:933.5px;top:575.74px;font-size:21.33px;color:#000;">20</div><div class="t sy" style="left:182.5px;top:575.74px;font-size:21.33px;color:#000;letter-spacing:0.12px;">21.04.2024 08...</div><div class="t sy" style="right:627.5px;top:575.74px;font-size:21.33px;color:#000;">3</div><div class="t sy" style="right:484px;top:575.74px;font-size:21.33px;color:#000;">103</div><div class="t sy" style="right:244px;top:575.74px;font-size:21.33px;color:#000;">5</div><div class="t sy" style="left:868px;top:575.74px;font-size:21.33px;color:#000;letter-spacing:0.22px;">Großauftrag</div>
</div>
<div class="r" style="left:2px;top:853px;width:1097px;height:6px;background:#a0a0a0;"></div>
<div class="r" style="left:1px;top:208px;width:1px;height:704px;background:#217346;"></div>
<div class="r" style="left:623px;top:859px;width:240px;height:26px;background:#fff;box-sizing:border-box;border:3px solid #217346;"></div>
<div class="r" style="left:626px;top:862px;width:234px;height:20px;overflow:hidden;"><div class="t sy" style="left:1.5px;top:0.94px;font-size:21.33px;letter-spacing:0.3px;color:#000">Summe von Menge: 76</div></div>
<svg style="left:0;top:0" width="1" height="1"><path d="M848.5 875.5 L855 869 M852.8 867.3 L857 871.5" stroke="#5a7fc7" stroke-width="1.7" fill="none" opacity="0.9"/></svg>
<div class="r" style="left:240px;top:203px;width:540px;height:41px;background:transparent;box-sizing:border-box;border:5px solid #ed1c24;"></div>
<svg style="left:0;top:0" width="1099" height="912"><line x1="624.1" y1="243" x2="764.1" y2="864.3" stroke="#ed1c24" stroke-width="5" shape-rendering="crispEdges"/></svg>
</body></html>
